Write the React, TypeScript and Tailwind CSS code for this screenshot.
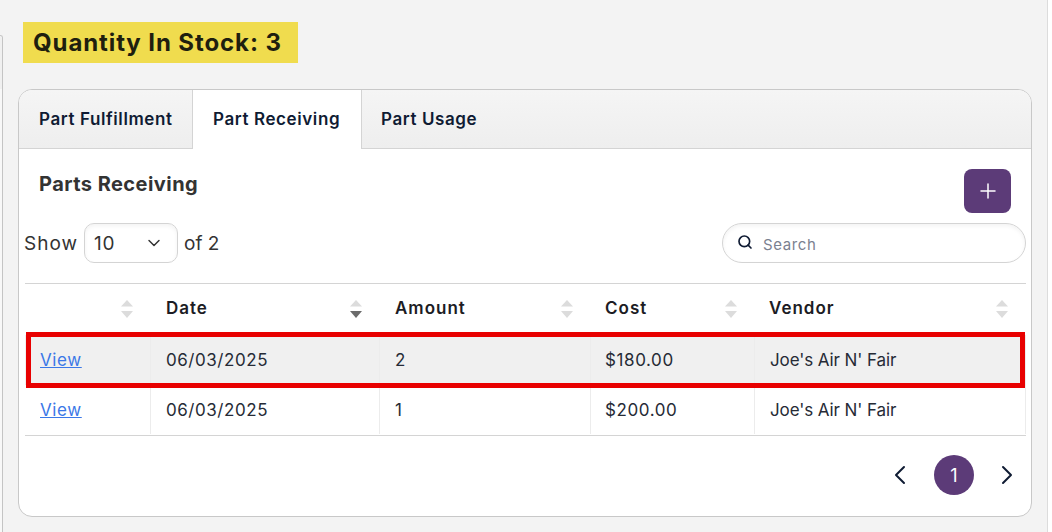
import { ChevronDown, ChevronLeft, ChevronRight, Plus, Search } from 'lucide-react';

type Row = {
  date: string;
  amount: string;
  cost: string;
  vendor: string;
};

const rows: Row[] = [
  { date: '06/03/2025', amount: '2', cost: '$180.00', vendor: "Joe's Air N' Fair" },
  { date: '06/03/2025', amount: '1', cost: '$200.00', vendor: "Joe's Air N' Fair" },
];

function SortArrows({ active }: { active?: boolean }) {
  return (
    <svg width="14" height="18" viewBox="0 0 14 18" className="shrink-0">
      <path d="M7 0 L13 6.5 L1 6.5 Z" fill="#dcdcdc" />
      <path d="M7 18 L13 11 L1 11 Z" fill={active ? '#6b6b6b' : '#dcdcdc'} />
    </svg>
  );
}

function HeaderCell({ label, className, active, textClass = 'pl-[15px]' }: { label?: string; className: string; active?: boolean; textClass?: string }) {
  return (
    <div className={`flex items-center justify-between pr-[17px] ${className}`}>
      <span className={`${textClass} text-[17px] font-semibold tracking-[1px] text-[#1c1c24]`}>{label}</span>
      <SortArrows active={active} />
    </div>
  );
}

export default function App() {
  return (
    <div className="flex h-[532px] w-[1052px] overflow-hidden bg-[#f3f3f3] font-['Inter',sans-serif]">
      {/* edge of the panel cut off on the left */}
      <div className="w-[3px] shrink-0 pt-[35px]">
        <div className="h-full overflow-hidden rounded-tr-[6px] border-r border-t border-[#c4c4c4] bg-[#f8f8f8]">
          <div className="h-[53px] bg-[#f0f0f0]" />
        </div>
      </div>

      <div className="ml-[15px] w-[1014px] shrink-0 pt-[22px]">
        <div className="ml-[5px] flex h-[41px] w-[275px] items-center bg-[#f0dc4e] pl-[10px] text-[24px] font-bold tracking-[0.9px] text-[#1f1f0f]">
          Quantity In Stock: 3
        </div>

        <div className="mt-[26px] h-[428px] overflow-hidden rounded-[14px] border border-[#c8c8c8] bg-white">
          <div className="flex h-[59px] border-b border-[#d4d4d4] bg-gradient-to-b from-[#f5f5f5] to-[#eeeeee] pt-[1px] text-[17px] font-semibold tracking-[0.6px] text-[#0f1b33]">
            <div className="flex w-[173px] items-center pl-[20px]">Part Fulfillment</div>
            <div className="-mb-px -mt-px flex w-[170px] items-center border-x border-[#d4d4d4] bg-white pl-[20px] pt-[1px]">Part Receiving</div>
            <div className="flex items-center pl-[19px]">Part Usage</div>
          </div>

          <div className="flex h-[134px] flex-col px-[5px]">
            <div className="flex h-[74px] items-start justify-between pr-[15px] pt-[20px]">
              <div className="pl-[15px] text-[20px] font-bold tracking-[0.45px] text-[#333333]">Parts Receiving</div>
              <button className="flex h-[44px] w-[47px] items-center justify-center rounded-[8px] bg-[#5c3b78] text-white">
                <Plus size={24} strokeWidth={1.5} />
              </button>
            </div>
            <div className="flex items-center justify-between">
              <div className="flex items-center text-[19px] tracking-[1px] text-[#333333]">
                <span className="pt-[2px]">Show</span>
                <div className="mx-[6px] flex h-[40px] w-[94px] items-center justify-between rounded-[10px] border border-[#d4d4d4] pl-[9px] pr-[13px] tracking-[0.8px] shadow-inner">
                  <span className="pt-[2px]">10</span>
                  <ChevronDown size={20} strokeWidth={1.75} />
                </div>
                <span className="pt-[2px] tracking-normal">of 2</span>
              </div>
              <div className="flex h-[40px] w-[304px] items-center rounded-full border border-[#d4d4d4] pl-[14px] shadow-inner">
                <Search size={16} strokeWidth={2.5} className="-mt-[2px] text-[#0f1b33]" />
                <span className="ml-[10px] mt-[4px] text-[15px] tracking-[0.6px] text-[#7b8190]">Search</span>
              </div>
            </div>
          </div>

          <div className="relative mx-[6px] w-[1001px]">
            <div className="flex h-[52px] border-t border-[#d4d4d4] pb-[2px]">
              <HeaderCell className="w-[126px]" />
              <HeaderCell className="w-[229px]" label="Date" active />
              <HeaderCell className="w-[211px]" label="Amount" />
              <HeaderCell className="w-[164px]" label="Cost" textClass="pl-[14px]" />
              <HeaderCell className="flex-1" label="Vendor" textClass="pl-[14px]" />
            </div>
            {rows.map((row, i) => (
              <div
                key={i}
                className={`flex border-b text-[17px] text-[#262b36] ${i === 0 ? 'h-[50px] border-[#ececec] bg-[#f0f0f0]' : 'h-[51px] border-[#d4d4d4] pb-px'}`}
              >
                <div className="flex w-[126px] items-center border-r border-[#ececec] pl-[15px] pt-[2px] tracking-[0.6px]">
                  <a href="#" className="text-[#3b78e7] underline">View</a>
                </div>
                <div className="flex w-[229px] items-center border-r border-[#ececec] pl-[15px] pt-[2px] tracking-[0.55px]">{row.date}</div>
                <div className="flex w-[211px] items-center border-r border-[#ececec] pl-[15px] pt-[2px]">{row.amount}</div>
                <div className="flex w-[164px] items-center border-r border-[#ececec] pl-[14px] pt-[2px] tracking-[0.6px]">{row.cost}</div>
                <div className="flex flex-1 items-center border-r border-[#ececec] pl-[15px] pt-[2px] tracking-[-0.1px]">{row.vendor}</div>
              </div>
            ))}
            {/* red highlight drawn over the first row */}
            <div className="pointer-events-none absolute left-[1px] top-[49px] h-[56px] w-[999px] border-[5px] border-[#e80000]" />
          </div>

          <div className="mt-[19px] flex items-center justify-end pr-[8px] text-[#0f1b33]">
            <ChevronLeft size={32} strokeWidth={1.5} />
            <div className="ml-[18px] mr-[17px] flex h-[40px] w-[40px] items-center justify-center rounded-full bg-[#5c3b78] text-[18px] text-white">1</div>
            <ChevronRight size={32} strokeWidth={1.5} />
          </div>
        </div>
      </div>

      <div className="ml-[15px] h-full flex-1 border-l border-[#dcdcdc] bg-white" />
    </div>
  );
}
